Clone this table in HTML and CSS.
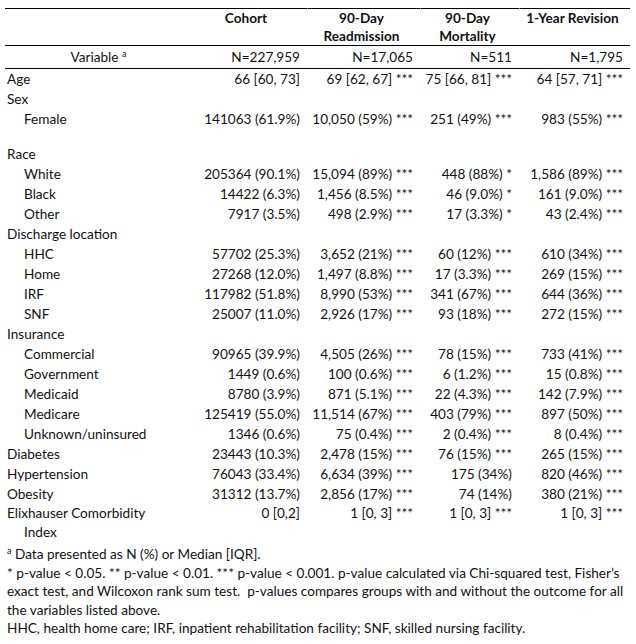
FILE: index.html
```html
<!DOCTYPE html>
<html>
<head>
<meta charset="utf-8">
<link rel="stylesheet" href="styles.css">
</head>
<body>
<div class="wrap">
<table class="t">
<colgroup>
<col class="c1"><col class="c2"><col class="c3"><col class="c4"><col class="c5">
</colgroup>
<thead>
<tr class="h">
<th></th>
<th>Cohort</th>
<th class="g">90-Day<br>Readmission</th>
<th class="g">90-Day<br>Mortality</th>
<th class="g">1-Year Revision</th>
</tr>
<tr class="n">
<td class="var">Variable <sup>a</sup></td>
<td>N=227,959</td>
<td>N=17,065</td>
<td>N=511</td>
<td>N=1,795</td>
</tr>
</thead>
<tbody>
<tr><td>Age</td><td>66 [60, 73]</td><td>69 [62, 67] ***</td><td>75 [66, 81] ***</td><td>64 [57, 71] ***</td></tr>
<tr><td>Sex</td><td></td><td></td><td></td><td></td></tr>
<tr><td class="i">Female</td><td>141063 (61.9%)</td><td>10,050 (59%) ***</td><td>251 (49%) ***</td><td>983 (55%) ***</td></tr>
<tr class="blank"><td></td><td></td><td></td><td></td><td></td></tr>
<tr><td>Race</td><td></td><td></td><td></td><td></td></tr>
<tr><td class="i">White</td><td>205364 (90.1%)</td><td>15,094 (89%) ***</td><td>448 (88%) *</td><td>1,586 (89%) ***</td></tr>
<tr><td class="i">Black</td><td>14422 (6.3%)</td><td>1,456 (8.5%) ***</td><td>46 (9.0%) *</td><td>161 (9.0%) ***</td></tr>
<tr><td class="i">Other</td><td>7917 (3.5%)</td><td>498 (2.9%) ***</td><td>17 (3.3%) *</td><td>43 (2.4%) ***</td></tr>
<tr><td>Discharge location</td><td></td><td></td><td></td><td></td></tr>
<tr><td class="i">HHC</td><td>57702 (25.3%)</td><td>3,652 (21%) ***</td><td>60 (12%) ***</td><td>610 (34%) ***</td></tr>
<tr><td class="i">Home</td><td>27268 (12.0%)</td><td>1,497 (8.8%) ***</td><td>17 (3.3%) ***</td><td>269 (15%) ***</td></tr>
<tr><td class="i">IRF</td><td>117982 (51.8%)</td><td>8,990 (53%) ***</td><td>341 (67%) ***</td><td>644 (36%) ***</td></tr>
<tr><td class="i">SNF</td><td>25007 (11.0%)</td><td>2,926 (17%) ***</td><td>93 (18%) ***</td><td>272 (15%) ***</td></tr>
<tr><td>Insurance</td><td></td><td></td><td></td><td></td></tr>
<tr><td class="i">Commercial</td><td>90965 (39.9%)</td><td>4,505 (26%) ***</td><td>78 (15%) ***</td><td>733 (41%) ***</td></tr>
<tr><td class="i">Government</td><td>1449 (0.6%)</td><td>100 (0.6%) ***</td><td>6 (1.2%) ***</td><td>15 (0.8%) ***</td></tr>
<tr><td class="i">Medicaid</td><td>8780 (3.9%)</td><td>871 (5.1%) ***</td><td>22 (4.3%) ***</td><td>142 (7.9%) ***</td></tr>
<tr><td class="i">Medicare</td><td>125419 (55.0%)</td><td>11,514 (67%) ***</td><td>403 (79%) ***</td><td>897 (50%) ***</td></tr>
<tr><td class="i">Unknown/uninsured</td><td>1346 (0.6%)</td><td>75 (0.4%) ***</td><td>2 (0.4%) ***</td><td>8 (0.4%) ***</td></tr>
<tr><td>Diabetes</td><td>23443 (10.3%)</td><td>2,478 (15%) ***</td><td>76 (15%) ***</td><td>265 (15%) ***</td></tr>
<tr><td>Hypertension</td><td>76043 (33.4%)</td><td>6,634 (39%) ***</td><td>175 (34%)</td><td>820 (46%) ***</td></tr>
<tr><td>Obesity</td><td>31312 (13.7%)</td><td>2,856 (17%) ***</td><td>74 (14%)</td><td>380 (21%) ***</td></tr>
<tr class="last"><td>Elixhauser Comorbidity<br><span class="ind">Index</span></td><td>0 [0,2]</td><td>1 [0, 3] ***</td><td>1 [0, 3] ***</td><td>1 [0, 3] ***</td></tr>
</tbody>
</table>
<div class="notes">
<p><sup>a</sup> Data presented as N (%) or Median [IQR].</p>
<p>* p-value &lt; 0.05. ** p-value &lt; 0.01. *** p-value &lt; 0.001. p-value calculated via Chi-squared test, Fisher’s<br>exact test, and Wilcoxon rank sum test.&nbsp; p-values compares groups with and without the outcome for all<br>the variables listed above.</p>
<p>HHC, health home care; IRF, inpatient rehabilitation facility; SNF, skilled nursing facility.</p>
</div>
</div>
</body>
</html>
```
FILE: styles.css
```css
body {
  margin: 0;
  background: #fff;
  color: #111;
  font-family: Lato, "Open Sans", sans-serif;
  font-size: 13.6px;
}
.wrap {
  padding: 8px 0 0 5px;
}
.t {
  border-collapse: separate;
  border-spacing: 0;
  table-layout: fixed;
  width: 625px;
}
.c1 { width: 185px; }
.c2 { width: 117px; }
.c3 { width: 113px; }
.c4 { width: 99px; }
.c5 { width: 111px; }
.t th,
.t td {
  padding: 0 7px 0 2px;
  line-height: 20px;
  white-space: nowrap;
  text-align: right;
  vertical-align: top;
}
.t td:first-child {
  text-align: left;
}
.h th {
  border-top: 1px solid #000;
  font-weight: bold;
  text-align: center;
  line-height: 18px;
}
.h th.g {
  border-left: 1px solid #fff;
}
.n td {
  border-top: 1px solid #000;
  border-bottom: 1px solid #000;
  padding-top: 2px;
  padding-bottom: 2px;
  line-height: 18px;
}
.t .n td.var {
  text-align: center;
  padding-left: 9px;
}
sup {
  font-size: 9px;
  line-height: 0;
  vertical-align: 5px;
}
.t td.i {
  padding-left: 19px;
}
.blank td {
  height: 15px;
  line-height: 15px;
}
.last td {
  line-height: 19px;
}
.ind {
  padding-left: 17px;
}
.notes {
  margin-top: 3px;
  padding-left: 2px;
  line-height: 18.5px;
  white-space: nowrap;
}
.notes p {
  margin: 0;
}
```
